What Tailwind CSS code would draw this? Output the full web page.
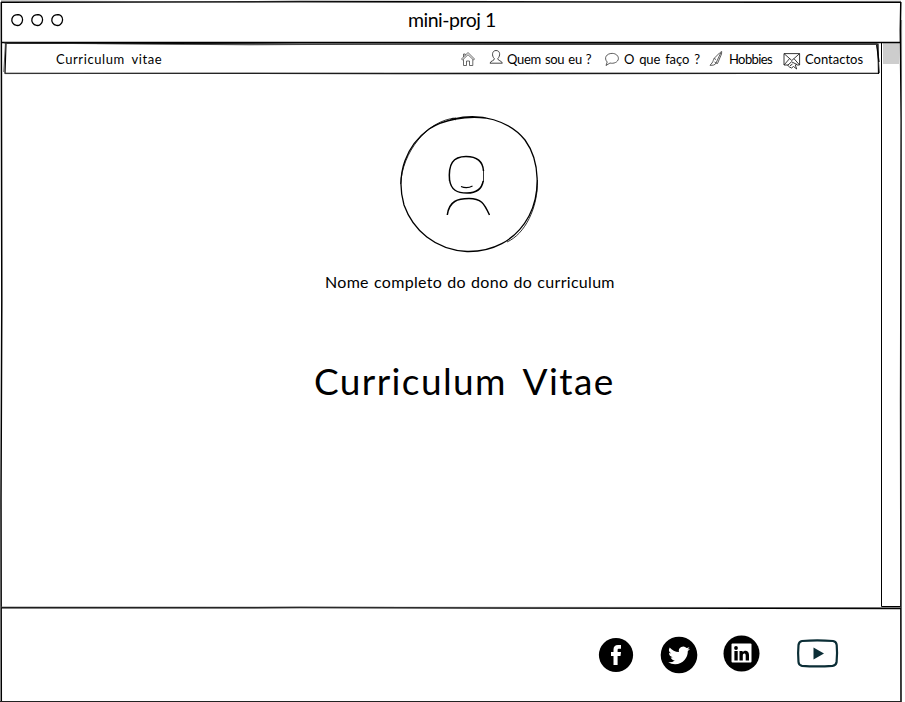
<!DOCTYPE html>
<html lang="pt">
<head>
<meta charset="utf-8">
<title>mini-proj 1</title>
<script src="https://cdn.jsdelivr.net/npm/@tailwindcss/browser@4"></script>
</head>
<body class="bg-white text-black font-['Lato',sans-serif] whitespace-nowrap">
<div class="relative w-[905px] h-[702px] overflow-hidden flex flex-col">
  <!-- hand-drawn window frame -->
  <svg class="absolute inset-0 pointer-events-none" width="905" height="702" fill="none" stroke="#000">
    <path stroke-width="1.5" d="M1 2.2L300 1.6L620 2L901 2.3M1.3 2L1.8 300L1 500L1.3 702M900.8 2L900.3 30L901.200 120L900.6 400L901 702M1 42.4H901M1 607.8L300 607.6L901 608.4"/>
    <path stroke-width=".7" stroke="#555" d="M1 1L400 2.5L901 1.3M1 607L901 607.6M901.600 20L901 600"/>
    <path stroke-width="1" stroke="#222" d="M0 701.5H901"/>
    <path stroke-width="1" d="M881.5 42V606.5H900"/>
  </svg>

  <header class="h-[42px] shrink-0 flex items-center">
    <svg class="ml-[10px] -mt-[2px] w-[56px]" width="56" height="16" viewBox="0 0 56 16" fill="none" stroke="#000" stroke-width="1.3">
      <path id="dot" d="M6 3C10 1.5 13 5 12.6 8C12.3 12 9 14 6.5 13.4C3 13 1.2 9.5 2 6.5C2.8 4 5 2.5 8.5 2.6"/>
      <use href="#dot" x="20"/><use href="#dot" x="40"/>
    </svg>
    <h1 class="ml-[342px] -mt-[2px] text-[19.5px] leading-[24px] tracking-[-0.5px]">mini-proj 1</h1>
  </header>

  <main class="h-[566px] shrink-0 flex">
    <div class="w-[881px] flex flex-col items-start">
      <nav class="relative h-[32px] w-full flex items-center text-[13px] leading-[16px]">
        <svg class="absolute left-0 top-0" width="881" height="34" fill="none" stroke="#000">
          <path stroke-width="1.2" d="M5 1.2L300 2L878 2.2L878.5 31.4L400 31.6L5 31.2L6 2"/>
          <path stroke-width=".8" stroke="#333" d="M4 1L250 2.8L500 1.5L877 1.6L879.5 31M5.4 2L3.8 30M5 31.6L500 31L878 31.5"/>
          <path stroke-width="1.3" d="M876.7 3L879 20"/>
        </svg>
        <span class="ml-[56px] mt-[2px] w-[404px] tracking-[0.6px] [word-spacing:3px]">Curriculum vitae</span>
        <svg class="mt-[1px] w-[16px] h-[18px]" viewBox="0 0 16 18" fill="none" stroke="#444" stroke-width=".8">
          <path d="M1.5 9L8 2.5L14.5 9L13.5 10L8 4.7L2.5 10ZM3.5 9.5V15.5H6.5V11H9.5V15.5H12.8V9.5M3.5 7V4H5.2V5.3"/>
        </svg>
        <svg class="ml-[12px] w-[16px] h-[18px]" viewBox="0 0 16 18" fill="none" stroke="#333" stroke-width=".9">
          <path d="M6.3 9.5C3.5 7 4 1.5 8 1.5C12.5 1.5 12.5 7 9.8 9.5C9.6 12 14 11.5 14.3 14.2H2C2.4 11.5 6.8 12 6.3 9.5Z"/>
        </svg>
        <span class="ml-[3px] mt-[2px] w-[97px] tracking-[-0.3px] [word-spacing:1px]">Quem sou eu ?</span>
        <svg class="mt-[1px] w-[16px] h-[18px]" viewBox="0 0 16 18" fill="none" stroke="#333" stroke-width=".8">
          <path d="M3.2 12C-.5 8 2.5 3.4 8.2 3.4C12 3.4 14.5 6 14.4 8.6C14.2 12.2 9.5 14 6 13L2 15.5Z"/>
        </svg>
        <span class="ml-[4px] mt-[2px] w-[84px] tracking-[-0.05px] [word-spacing:1.5px]">O que faço ?</span>
        <svg class="mt-[2px] w-[16px] h-[18px]" viewBox="0 0 16 18" fill="none" stroke="#333" stroke-width=".8">
          <path d="M6 8.500L11.500 3L13.700 1.500L13.500 4L9.500 13.500L8 13L12.700 3M6 8.500L8 9.500M8 13L6.500 12M6 8.500C5 10 5.500 11 4 13L2 15.300C4.500 15.500 7.500 15 8 13"/>
        </svg>
        <span class="ml-[5px] mt-[2px] w-[54px] tracking-[-0.6px]">Hobbies</span>
        <svg class="mt-[6px] w-[18px] h-[18px]" viewBox="0 0 18 18" fill="none" stroke="#222" stroke-width=".9">
          <path d="M6 13H1V1.600H16.600V13H14M1 1.600L8.800 8.500L16.600 1.600M1 13L6.500 6.700M16.600 13L11 6.700M4.500 13.500L8.500 9.800L14 12.500L12.300 13L13.700 17L10.500 14.500L8.500 16L5.500 14.500M7 13.800L9.500 12"/>
        </svg>
        <span class="ml-[4px] mt-[2px] tracking-[0px]">Contactos</span>
      </nav>
      <svg class="mt-[41px] ml-[398px]" width="142" height="140" viewBox="398 115 142 140" fill="none" stroke="#000">
        <path stroke-width="1.3" d="M454 119C480 112 510 121 525 140C541 162 540 195 529 216C515 242 491 252 467 251.500C435 250 413 230 404 205C395 173 407 145 429 129C444 119 466 116 486 118"/>
        <path stroke-width=".8" d="M400.700 184C402 153 427 120 456 118M537.500 180C538 208 525 234 507 242M450 120L453 118L456 120"/>
        <path stroke-width="1.5" d="M449.600 181C448 164 453 156.500 466 156.500C479 156.500 483 163 483.500 171M449.600 180C451 190 457 193 467 193C477 193 482 188 483.200 181"/>
        <path stroke-width=".8" d="M483.500 170V182"/>
        <path stroke-width="1.100" d="M461 186.500Q467 189 472.500 186"/>
        <path stroke-width="1.500" d="M447.300 215C449 201 458 198.500 469 198.500C481 198.500 484 203 489.500 215"/>
      </svg>
      <p class="mt-[17px] ml-[325px] text-[16px] leading-[20px] tracking-[0.3px] [word-spacing:0.8px]">Nome completo do dono do curriculum</p>
      <h2 class="mt-[67px] ml-[314px] text-[37px] leading-[44px] tracking-[1.4px] [word-spacing:6px]">Curriculum Vitae</h2>
    </div>
    <div class="ml-[2px] mt-[1px] w-[16px] h-[21px] bg-[#cdcdcd]"></div>
  </main>

  <footer class="flex-1 flex items-start pl-[598px] pt-[26px]">
    <svg width="36" height="40" viewBox="598 634 36 40">
      <circle cx="616" cy="655" r="17.100"/>
      <path fill="#fff" d="M613.500 665V656H611V652H613.500V649.500C613.500 646.500 615 645 618 645H621V648.700H619C618 648.700 617.600 649.200 617.600 650V652H621L620.500 656H617.600V665Z"/>
    </svg>
    <svg class="ml-[26px]" width="38" height="40" viewBox="660 634 38 40">
      <circle cx="679" cy="655" r="18.300"/>
      <path fill="#fff" transform="translate(668.200 644.500) scale(.91)" d="M23.950 4.570a10 10 0 01-2.820.770 4.960 4.960 0 002.160-2.720c-.950.550-2 .950-3.130 1.190a4.920 4.920 0 00-8.380 4.480C7.690 8.090 4.070 6.130 1.640 3.160a4.930 4.930 0 001.520 6.570 4.900 4.900 0 01-2.230-.610v.060a4.920 4.920 0 003.950 4.830 5 5 0 01-2.210.080 4.940 4.940 0 004.600 3.420A9.870 9.870 0 010 19.540a13.990 13.990 0 007.550 2.210c9.050 0 14-7.500 14-13.980 0-.210 0-.420-.020-.630a9.940 9.940 0 002.460-2.550z"/>
    </svg>
    <svg class="ml-[24px]" width="40" height="40" viewBox="722 634 40 40">
      <circle cx="741.500" cy="653.500" r="18"/>
      <rect x="731.500" y="643.500" width="20" height="19" rx="1" fill="#fff"/>
      <circle cx="736" cy="648" r="1.900"/>
      <path d="M734.400 651H737.700V660.500H734.400ZM739.500 651H742.600V652.300C744.500 649.700 749 650.300 749 655V660.500H745.700V655.500C745.700 652.800 742.800 652.900 742.800 655.500V660.500H739.500Z"/>
    </svg>
    <svg class="ml-[34px]" width="44" height="40" viewBox="796 634 44 40">
      <path fill="none" stroke="#0b2e36" stroke-width="2.200" d="M802 641Q817 639.700 833 641Q836.300 641.500 836.700 645Q837.500 653 836.600 662Q836 665.500 832.500 665.900Q817 667 802 665.900Q798.800 665.400 798.500 662Q797.700 653 798.500 645Q799 641.400 802 641Z"/>
      <path fill="#0b2e36" d="M813.500 647.500L824 653.500L813.500 659.500Z"/>
    </svg>
  </footer>
</div>
</body>
</html>
